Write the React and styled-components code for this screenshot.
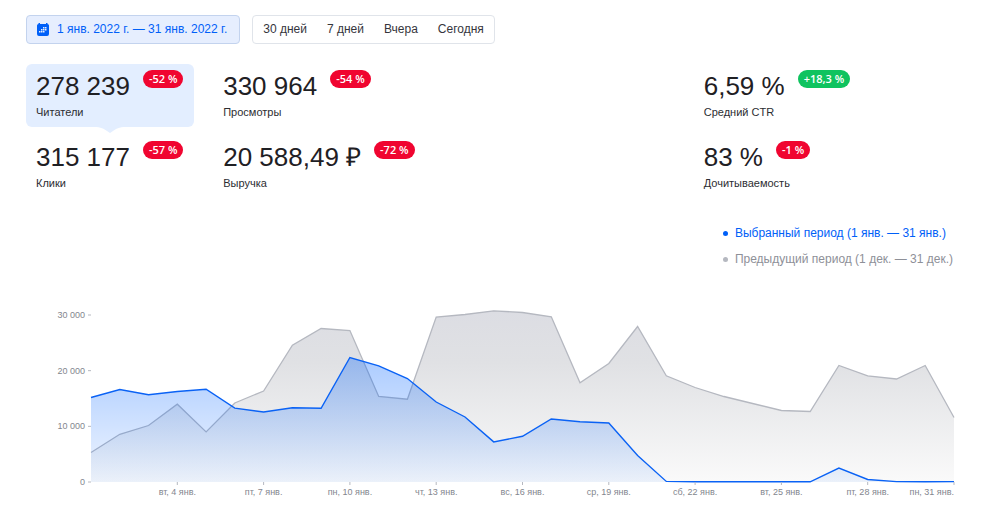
import React from 'react'
import styled, { createGlobalStyle } from 'styled-components'

const GlobalStyle = createGlobalStyle`
  body {
    margin: 0;
    background: #fff;
    color: #1f2024;
    font-family: 'Liberation Sans', Arial, sans-serif;
  }
`

const Page = styled.main`
  padding: 15px 45px 20px 26px;
`

const Toolbar = styled.div`
  display: flex;
  gap: 12px;
`

const DateButton = styled.button`
  display: flex;
  align-items: center;
  gap: 8px;
  height: 29px;
  padding: 0 12px 1px 10px;
  border: 1px solid #c3d3ee;
  border-radius: 4px;
  background: #e6eefe;
  color: #0060f8;
  font: 12px 'Liberation Sans', Arial, sans-serif;
  white-space: nowrap;
`

const Presets = styled.div`
  display: flex;
  box-sizing: border-box;
  height: 29px;
  border: 1px solid #e0e4ea;
  border-radius: 4px;
`

const Preset = styled.button`
  padding: 0 10px 1px;
  border: 0;
  background: none;
  color: #35353c;
  font: 12px 'Liberation Sans', Arial, sans-serif;
  white-space: nowrap;
`

const Stats = styled.section`
  display: grid;
  grid-template-columns: 168fr 461fr 261fr;
  gap: 8px 19px;
  margin-top: 20px;
`

const Card = styled.div`
  position: relative;
  padding: 6px 10px 7px;
  border-radius: 6px;
  background: ${p => (p.$active ? '#e3eeff' : 'none')};
`

const Pointer = styled.svg`
  position: absolute;
  top: 100%;
  left: 50%;
  margin-left: -16px;
  fill: #e3eeff;
`

const ValueRow = styled.div`
  display: flex;
  align-items: flex-start;
  gap: 13px;
`

const Value = styled.span`
  font-size: 26px;
  line-height: 32px;
  white-space: nowrap;
`

const Badge = styled.span`
  padding: 0 6px;
  border-radius: 9px;
  background: ${p => (p.$up ? '#0fc35f' : '#f00530')};
  color: #fff;
  font: 600 11px/18px 'Open Sans', 'Noto Sans', sans-serif;
  white-space: nowrap;
`

const Label = styled.div`
  margin-top: 2px;
  color: #2c2d32;
  font-size: 11px;
  line-height: 16px;
`

const Legend = styled.ul`
  width: fit-content;
  margin: 22px 0 0 auto;
  padding: 0 2px 0 0;
  list-style: none;
`

const LegendItem = styled.li`
  display: flex;
  align-items: center;
  gap: 7px;
  color: ${p => p.$color};
  font-size: 12px;
  line-height: 26px;
`

const Dot = styled.span`
  width: 5px;
  height: 5px;
  border-radius: 50%;
  background: ${p => p.$color};
`

const ChartSvg = styled.svg`
  display: block;
  width: 100%;
  height: auto;

  text {
    fill: #83868e;
    font-size: 9px;
  }
`

const presets = ['30 дней', '7 дней', 'Вчера', 'Сегодня']

const stats = [
  { value: '278 239', label: 'Читатели', diff: '-52 %', active: true },
  { value: '330 964', label: 'Просмотры', diff: '-54 %' },
  { value: '6,59 %', label: 'Средний CTR', diff: '+18,3 %', up: true },
  { value: '315 177', label: 'Клики', diff: '-57 %' },
  { value: '20 588,49 ₽', label: 'Выручка', diff: '-72 %' },
  { value: '83 %', label: 'Дочитываемость', diff: '-1 %' },
]

const current = [
  15180, 16620, 15660, 16260, 16670, 13280, 12570, 13330, 13240, 22370, 20870, 18590, 14370, 11680, 7200, 8210,
  11320, 10830, 10600, 4760, 100, 60, 40, 60, 60, 40, 2515, 450, 80, 40, 80,
]

const previous = [
  5300, 8570, 10150, 13980, 9000, 14190, 16350, 24570, 27570, 27200, 15360, 14870, 29620, 30090, 30750, 30450,
  29670, 17820, 21290, 27930, 19080, 16980, 15360, 14100, 12840, 12660, 20930, 19080, 18500, 20930, 11590,
]

const yTicks = [
  [0, '0'],
  [10000, '10 000'],
  [20000, '20 000'],
  [30000, '30 000'],
]

const xTicks = [
  [3, 'вт, 4 янв.'],
  [6, 'пт, 7 янв.'],
  [9, 'пн, 10 янв.'],
  [12, 'чт, 13 янв.'],
  [15, 'вс, 16 янв.'],
  [18, 'ср, 19 янв.'],
  [21, 'сб, 22 янв.'],
  [24, 'вт, 25 янв.'],
  [27, 'пт, 28 янв.'],
  [30, 'пн, 31 янв.'],
]

const LEFT = 65
const RIGHT = 928
const BASE = 210
const TOP = 39

const x = day => LEFT + (day * (RIGHT - LEFT)) / 30
const y = count => BASE - (count * 167) / 30000
const line = data => data.map((v, i) => `${x(i).toFixed(1)},${y(v).toFixed(1)}`).join(' ')
const area = data => `${LEFT},${BASE} ${line(data)} ${RIGHT},${BASE}`

const CalendarIcon = () => (
  <svg width="12" height="13" viewBox="0 0 24 26" aria-hidden="true">
    <path fill="#0060f8" d="M3 0h3v2h12V0h3v2a3 3 0 0 1 3 3v17a4 4 0 0 1-4 4H4a4 4 0 0 1-4-4V5a3 3 0 0 1 3-3z" />
    <path
      fill="#e6eefe"
      d="M12 8h3v3h-3zM16 8h3v3h-3zM8 12h3v3H8zM12 12h3v3h-3zM16 12h3v3h-3zM4 16h3v3H4zM8 16h3v3H8zM12 16h3v3h-3z"
    />
  </svg>
)

const Chart = () => (
  <ChartSvg viewBox="0 0 929 230" role="img" aria-label="Читатели по дням">
    <defs>
      <linearGradient id="previous" gradientUnits="userSpaceOnUse" x1="0" x2="0" y1={TOP} y2={BASE}>
        <stop offset="0" stopColor="#dcdde3" />
        <stop offset="0.3" stopColor="#e0e1e4" />
        <stop offset="1" stopColor="#fafafa" />
      </linearGradient>
      <linearGradient id="current" gradientUnits="userSpaceOnUse" x1="0" x2="0" y1="86" y2={BASE}>
        <stop offset="0" stopColor="#0062ff" stopOpacity="0.33" />
        <stop offset="1" stopColor="#0062ff" stopOpacity="0.06" />
      </linearGradient>
    </defs>
    <polygon points={area(previous)} fill="url(#previous)" />
    <polyline points={line(previous)} fill="none" stroke="#b5b8c0" strokeWidth="1.3" />
    <polygon points={area(current)} fill="url(#current)" />
    <polyline points={line(current)} fill="none" stroke="#0a62f5" strokeWidth="1.4" />
    {yTicks.map(([count, text]) => (
      <g key={text}>
        <path d={`M${LEFT - 3} ${y(count)}h3`} stroke="#b5b8c0" />
        <text x={LEFT - 6} y={y(count) + 3} textAnchor="end">
          {text}
        </text>
      </g>
    ))}
    {xTicks.map(([day, text]) => (
      <g key={text}>
        <path d={`M${x(day)} ${BASE}v3`} stroke="#b5b8c0" />
        <text x={x(day)} y={BASE + 13} textAnchor={day === 30 ? 'end' : 'middle'}>
          {text}
        </text>
      </g>
    ))}
  </ChartSvg>
)

const App = () => (
  <>
    <GlobalStyle />
    <Page>
      <Toolbar>
        <DateButton type="button">
          <CalendarIcon />
          1 янв. 2022 г. — 31 янв. 2022 г.
        </DateButton>
        <Presets>
          {presets.map(text => (
            <Preset key={text} type="button">
              {text}
            </Preset>
          ))}
        </Presets>
      </Toolbar>
      <Stats>
        {stats.map(({ value, label, diff, active, up }) => (
          <Card key={label} $active={active}>
            <ValueRow>
              <Value>{value}</Value>
              <Badge $up={up}>{diff}</Badge>
            </ValueRow>
            <Label>{label}</Label>
            {active && (
              <Pointer width="32" height="6" viewBox="0 0 32 6">
                <path d="M0 0h32c-7 0-10 2-13 4l-3 2-3-2C10 2 7 0 0 0z" />
              </Pointer>
            )}
          </Card>
        ))}
      </Stats>
      <Legend>
        <LegendItem $color="#0060f8">
          <Dot $color="#0060f8" />
          Выбранный период (1 янв. — 31 янв.)
        </LegendItem>
        <LegendItem $color="#8e9098">
          <Dot $color="#b5b8c0" />
          Предыдущий период (1 дек. — 31 дек.)
        </LegendItem>
      </Legend>
      <Chart />
    </Page>
  </>
)

export default App
